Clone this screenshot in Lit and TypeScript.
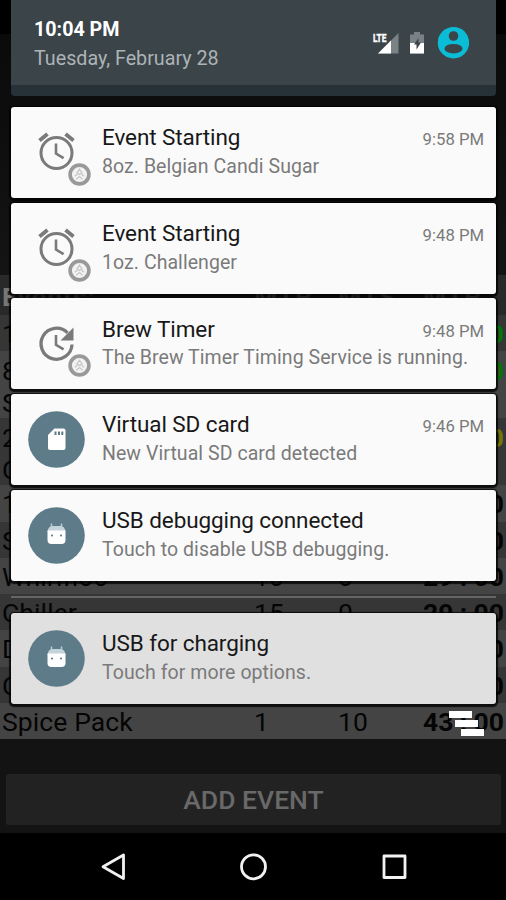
import { LitElement, html, css, svg } from "lit";
import { customElement, property } from "lit/decorators.js";

const alarm = svg`
  <g fill="none" stroke="#7a7a7a" stroke-width="3">
    <circle cx="20.500" cy="22" r="15.500"/>
    <path d="M20 12.500v10l7.600 4.600" stroke-width="2.600"/>
    <path d="M3.500 9.500l8-6.500M29.500 3l8 6.500" stroke-width="3.800"/>
  </g>`;
const update = svg`
  <path d="M31.500 10.800A15.500 15.500 0 1 0 36 22.500" fill="none" stroke="#7a7a7a" stroke-width="3.300"/>
  <path d="M37.500 5.500v13h-13z" fill="#7a7a7a"/>
  <path d="M20 13v9.800l7.600 4.600" fill="none" stroke="#7a7a7a" stroke-width="2.600"/>`;
const badge = svg`
  <circle cx="11" cy="11" r="9" fill="#f2f2f2" stroke="#999" stroke-width="3.500"/>
  <path d="M11 6l2.500 3.500-2.500 1.500-2.500-1.500zM6.500 12.500l2.500-1.500M13 11l2.500 1.500M8 15.500l3-2.500 3 2.500" fill="none" stroke="#c8c8c8" stroke-width="1.300"/>`;
const sd = svg`
  <path d="M26.500 17.500H35.500q2 0 2 2V37q0 2-2 2H22q-2 0-2-2V24z" fill="#fff"/>
  <path d="M26.500 20.500h2v3.500h-2zM30 20.500h2v3.500h-2zM33.300 20.500h2v3.500h-2z" fill="#5d7b88"/>`;
const droid = svg`
  <path d="M23.500 16.500v5M33.500 16.500v5" stroke="#b9cbd2" stroke-width="1.500"/>
  <path d="M19.500 25q.5-6 5-6h8q4.500 0 5 6z" fill="#c4d3d9"/>
  <path d="M19.500 23.500h18v9.500q0 4-4 4h-10q-4 0-4-4z" fill="#fff"/>
  <circle cx="24" cy="28.500" r=".9" fill="#46606c"/><circle cx="33" cy="28.500" r=".9" fill="#46606c"/>`;

@customElement("notice-card")
class NoticeCard extends LitElement {
  @property() kind = "";
  @property() heading = "";
  @property() detail = "";
  @property() time = "";
  static styles = css`
    :host { display: flex; height: 91px; box-sizing: border-box; border-radius: 3px; background: #fafafa;
      box-shadow: 0 1px 1px 2px #000c; padding-right: 12px; }
    .icon { width: 91px; flex: none; }
    .round { display: block; margin: 17px 0 0 17px; width: 57px; height: 57px; }
    .stack { display: grid; margin: 24px 0 0 25px; width: 56px; }
    .main { grid-area: 1/1; width: 40px; height: 42px; }
    .badge { grid-area: 1/1; width: 23px; height: 23px; margin: 32px 0 0 32px; }
    .text { flex: 1; padding-top: 16.400px; }
    .line { display: flex; justify-content: space-between; align-items: baseline; height: 28.600px; line-height: 29px; white-space: nowrap; }
    .title { font-size: 22.500px; color: #181818; letter-spacing: -.09px; }
    .detail { font-size: 19.500px; color: #7a7a7a; letter-spacing: .06px; }
    .time { font-size: 16.700px; color: #7a7a7a; }
  `;
  render() {
    const round = this.kind === "sd" || this.kind === "droid";
    return html`
      <div class="icon">
        ${round
          ? html`<svg class="round" viewBox="0 0 57 57"><circle cx="28.500" cy="28.500" r="28.300" fill="#5d7b88"/>${this.kind === "sd" ? sd : droid}</svg>`
          : html`<div class="stack">
              <svg class="main" viewBox="0 0 40 42">${this.kind === "alarm" ? alarm : update}</svg>
              <svg class="badge" viewBox="0 0 22 22">${badge}</svg>
            </div>`}
      </div>
      <div class="text">
        <div class="line"><span class="title">${this.heading}</span><span class="time">${this.time}</span></div>
        <div class="line"><span class="detail">${this.detail}</span></div>
      </div>`;
  }
}

const rows = [
  { cls: "dark", name: "1oz. Hops", a: "", b: "", t: "12:00", tc: "green" },
  { cls: "light tall", name: "8oz. Candi Sugar", a: "", b: "", t: "12:00", tc: "green" },
  { cls: "dark tall", name: "2oz. Cascade Cones", a: "", b: "", t: "20:00", tc: "yellow" },
  { cls: "light", name: "1oz. Hops", a: "", b: "", t: "24:00", tc: "" },
  { cls: "dark", name: "Spices", a: "", b: "", t: "25:00", tc: "" },
  { cls: "light", name: "Whirlfloc", a: "10", b: "0", t: "29:00", tc: "" },
  { cls: "dark", name: "Chiller", a: "15", b: "0", t: "29:00", tc: "" },
  { cls: "light", name: "Dry Hop", a: "", b: "", t: "33:00", tc: "" },
  { cls: "dark", name: "Clarifier", a: "", b: "", t: "38:00", tc: "" },
  { cls: "light", name: "Spice Pack", a: "1", b: "10", t: "43:00", tc: "" },
];

@customElement("app-root")
class AppRoot extends LitElement {
  static styles = css`
    :host { display: grid; width: 506px; height: 900px; overflow: hidden; background: #000; font-family: Roboto, sans-serif; }
    .app { grid-area: 1/1; display: flex; flex-direction: column; padding-top: 34px; min-width: 0; }
    .top { height: 241px; background: linear-gradient(#0a0a0a, #141414); }
    .row { display: grid; grid-template-columns: 252px 84px 85px 1fr; height: 36.3px; padding: 0 2px; box-sizing: border-box;
      font-size: 26.500px; line-height: 38px; color: #050505; white-space: nowrap; }
    .head { height: 40px; line-height: 43px; background: #292929; color: #777; font-weight: 700; letter-spacing: 1px; }
    .dark { background: #363636; }
    .light { background: #444; }
    .tall { height: 67px; line-height: 32px; padding-top: 4px; }
    .name { width: 135px; white-space: normal; letter-spacing: .1px; }
    .t { display: flex; justify-content: space-between; font-weight: 700; }
    .green { color: #047504; }
    .yellow { color: #757504; }
    .foot { height: 93.400px; padding: 35px 5px 0 6px; box-sizing: border-box; background: #131313; }
    .add { height: 51px; border-radius: 2px; background: #222; color: #696969; font-weight: 500; font-size: 26.500px;
      line-height: 52px; text-align: center; }
    .nav { flex: 1; background: #000; }
    .nav svg { display: block; }
    .shade { grid-area: 1/1; padding: 0 10px 0 11px; min-width: 0; z-index: 1; }
    .status { display: flex; height: 96px; box-sizing: border-box; border-bottom: 11px solid #263238; border-radius: 0 0 4px 4px;
      background: #3a4449; padding: 17px 27px 0 23px; justify-content: space-between; }
    .clock { font-size: 19.700px; line-height: 25px; font-weight: 700; color: #fff; }
    .date { font-size: 19.700px; line-height: 33px; color: #adb3b6; }
    .icons { width: 98px; height: 36px; margin-top: 8px; }
    .lte { font: 700 11px Roboto, sans-serif; }
    .cards { display: grid; gap: 4.700px; margin-top: 11px; }
    .divider { height: 2px; background: #666; margin: 15px 0; }
    .low { background: #e0e0e0; }
    .clear { display: block; width: 35px; height: 26px; margin: 7px 12px 0 auto; }
  `;
  render() {
    return html`
      <div class="app">
        <div class="top"></div>
        <div class="row head"><span>Events:</span><span>MTR</span><span>MTS</span><span>MTR</span></div>
        ${rows.map((r) => html`<div class="row ${r.cls}"><span class="name">${r.name}</span><span>${r.a}</span><span>${r.b}</span><span class="t ${r.tc}"><span>${r.t.slice(0, 2)}</span><span>:</span><span>${r.t.slice(3)}</span></span></div>`)}
        <div class="foot"><div class="add">ADD EVENT</div></div>
        <div class="nav"><svg width="506" height="67" viewBox="0 833 506 67" fill="none" stroke="#f2f2f2" stroke-width="2.800" stroke-linejoin="round">
          <path d="M123.500 855v23.500L103 866.800z"/><circle cx="253.500" cy="866.800" r="12"/><rect x="384" y="856" width="21" height="21.500"/>
        </svg></div>
      </div>
      <div class="shade">
        <div class="status">
          <div><div class="clock">10:04 PM</div><div class="date">Tuesday, February 28</div></div>
          <svg class="icons" viewBox="371 25 98 36">
            <path d="M398.500 33v20.500h-20.500z" fill="#7b8286"/><path d="M391 40.500v13h-13z" fill="#fff"/>
            <path d="M371 31h16.500v11h-16.500z" fill="#3a4449"/>
            <text class="lte" x="373" y="41.500" fill="#fff" stroke="#fff" stroke-width=".4" textLength="13.500" lengthAdjust="spacingAndGlyphs">LTE</text>
            <path d="M414 32h6v2.500h4v19h-14v-19h4z" fill="#7b8286"/><path d="M410 43h14v10.500h-14z" fill="#fff"/>
            <path d="M418.500 38l-4.500 6.500h2.500v5l4.500-7h-2.500z" fill="#3a4449"/>
            <circle cx="453.500" cy="42.700" r="15.700" fill="#0bbcd6"/>
            <circle cx="453.500" cy="36" r="4.800" fill="#3a4449"/><ellipse cx="453.500" cy="48.700" rx="9" ry="4.800" fill="#3a4449"/>
          </svg>
        </div>
        <div class="cards">
          <notice-card kind="alarm" heading="Event Starting" detail="8oz. Belgian Candi Sugar" time="9:58 PM"></notice-card>
          <notice-card kind="alarm" heading="Event Starting" detail="1oz. Challenger" time="9:48 PM"></notice-card>
          <notice-card kind="update" heading="Brew Timer" detail="The Brew Timer Timing Service is running." time="9:48 PM"></notice-card>
          <notice-card kind="sd" heading="Virtual SD card" detail="New Virtual SD card detected" time="9:46 PM"></notice-card>
          <notice-card kind="droid" heading="USB debugging connected" detail="Touch to disable USB debugging."></notice-card>
        </div>
        <div class="divider"></div>
        <notice-card class="low" kind="droid" heading="USB for charging" detail="Touch for more options."></notice-card>
        <svg class="clear" viewBox="0 0 35 26" fill="#fff"><path d="M0 0h23v7H0zM6 9h23v7H6zM12 18h23v7H12z"/></svg>
      </div>`;
  }
}
